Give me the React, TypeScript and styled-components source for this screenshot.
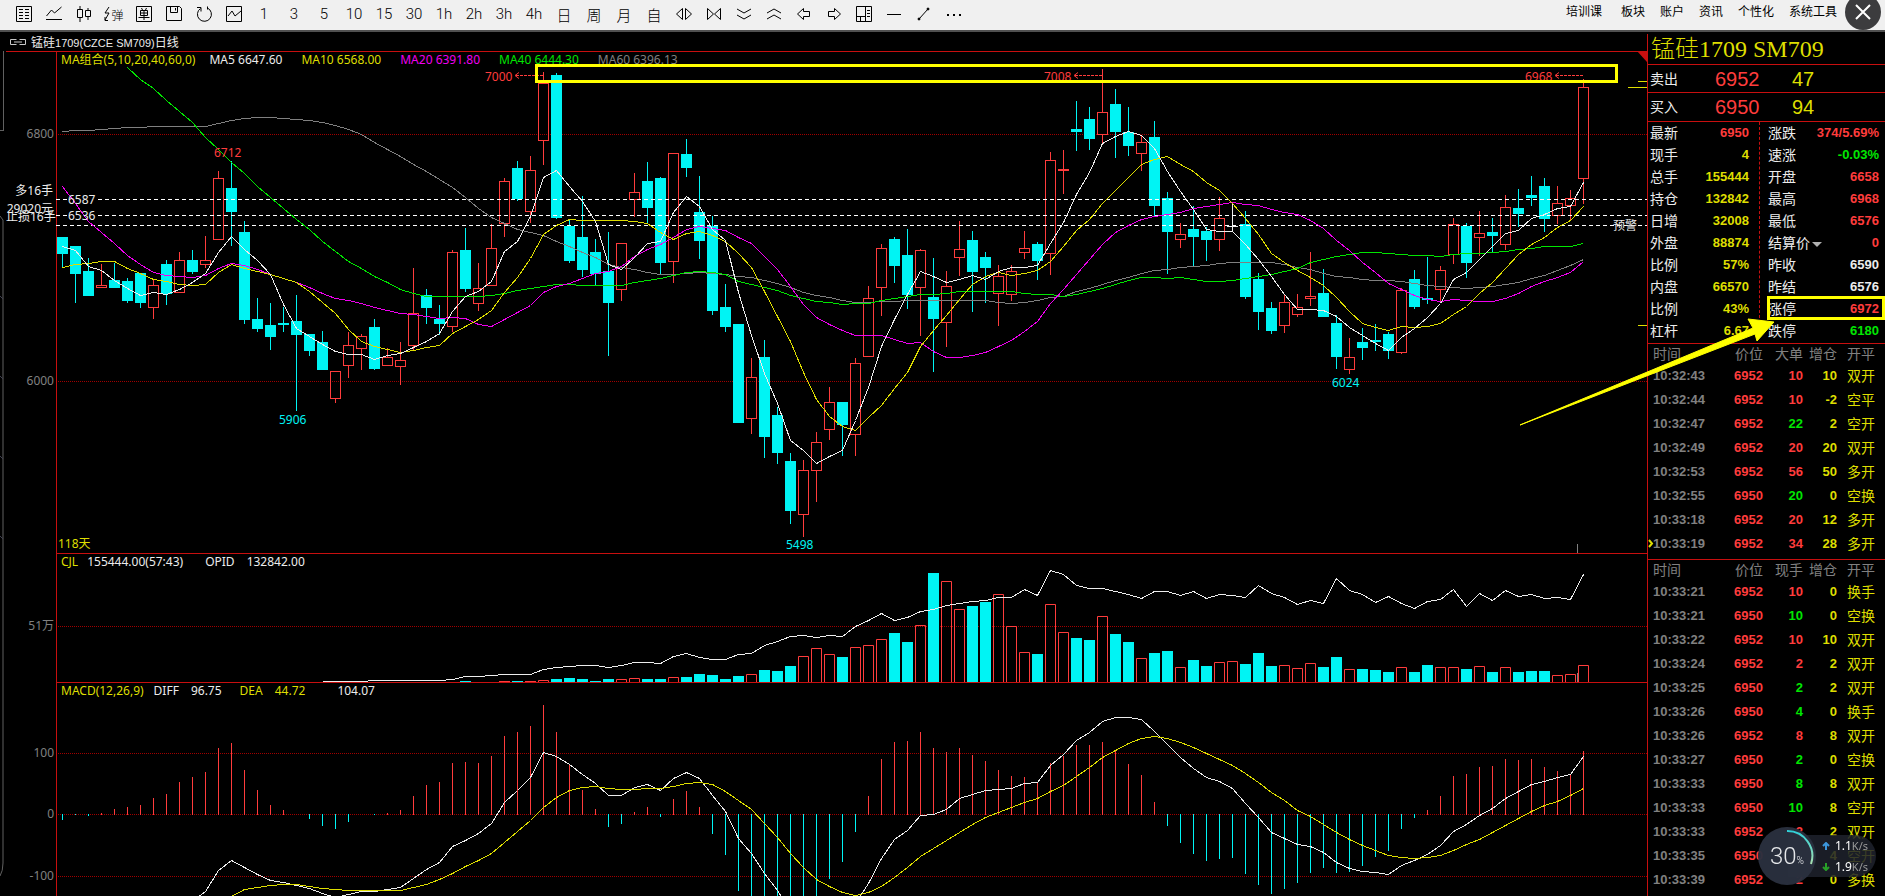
import React from 'react';
import styled, { createGlobalStyle } from 'styled-components';

const RED = '#ff3c3c';
const LINE = '#c80f0f';
const GRID = '#a00000';
const CYAN = '#00f4f4';
const WHITE = '#ececec';
const YELLOW = '#dede00';
const MARK = '#ffff00';
const MAGENTA = '#f000f0';
const GREEN = '#00e600';
const GREY = '#808080';

const SANS = '"Noto Sans", "Noto Sans CJK SC", sans-serif';
const ARIAL = '"Liberation Sans", "Noto Sans CJK SC", sans-serif';

/* ---------- data ---------- */

type Kind = 'u' | 'd' | 'n';
/* high, body top, body bottom, low, direction */
type Candle = [number, number, number, number, Kind];

const CANDLES: Candle[] = [
  [187, 187, 204, 218, 'd'], [196, 196, 224, 253, 'd'], [208, 221, 246, 246, 'd'], [214, 235, 238, 238, 'u'],
  [213, 230, 238, 238, 'd'], [228, 231, 251, 253, 'd'], [223, 223, 253, 258, 'd'], [229, 235, 258, 269, 'u'],
  [210, 214, 244, 255, 'd'], [202, 210, 243, 243, 'u'], [200, 210, 222, 224, 'd'], [186, 210, 215, 218, 'u'],
  [121, 128, 190, 190, 'u'], [111, 138, 162, 196, 'd'], [171, 182, 270, 274, 'd'], [248, 269, 279, 282, 'd'],
  [253, 275, 287, 300, 'd'], [257, 273, 275, 282, 'd'], [245, 271, 285, 361, 'd'], [284, 284, 301, 306, 'd'],
  [281, 292, 320, 320, 'd'], [321, 321, 349, 353, 'u'], [282, 295, 316, 328, 'u'], [284, 286, 299, 320, 'u'],
  [269, 277, 319, 320, 'd'], [298, 307, 316, 316, 'u'], [292, 310, 317, 335, 'u'], [218, 263, 296, 300, 'u'],
  [239, 245, 258, 274, 'd'], [255, 269, 274, 285, 'd'], [200, 202, 277, 282, 'u'], [178, 200, 239, 242, 'd'],
  [213, 238, 254, 261, 'u'], [174, 198, 236, 236, 'u'], [128, 131, 174, 187, 'u'], [111, 118, 149, 151, 'd'],
  [106, 120, 162, 173, 'u'], [22, 33, 91, 115, 'u'], [23, 25, 168, 169, 'd'], [170, 176, 211, 213, 'd'],
  [146, 187, 220, 227, 'd'], [189, 202, 224, 236, 'd'], [182, 221, 253, 306, 'd'], [193, 193, 240, 251, 'u'],
  [123, 142, 150, 167, 'u'], [112, 131, 158, 173, 'd'], [127, 128, 213, 224, 'd'], [103, 103, 212, 233, 'u'],
  [89, 104, 118, 127, 'd'], [126, 162, 191, 209, 'd'], [166, 176, 261, 265, 'd'], [234, 257, 277, 282, 'd'],
  [274, 274, 373, 373, 'd'], [308, 327, 369, 384, 'u'], [290, 307, 387, 408, 'd'], [357, 365, 403, 414, 'd'],
  [403, 411, 461, 474, 'd'], [410, 420, 465, 487, 'u'], [382, 392, 421, 452, 'u'], [337, 352, 380, 390, 'u'],
  [352, 352, 375, 406, 'd'], [308, 313, 385, 406, 'u'], [236, 248, 307, 307, 'u'], [194, 198, 238, 266, 'u'],
  [187, 189, 216, 233, 'd'], [179, 205, 245, 259, 'd'], [199, 200, 238, 286, 'u'], [208, 247, 269, 322, 'd'],
  [221, 236, 273, 297, 'u'], [171, 199, 208, 226, 'u'], [181, 190, 222, 262, 'd'], [202, 207, 218, 253, 'd'],
  [215, 226, 244, 276, 'u'], [215, 221, 245, 251, 'u'], [181, 198, 203, 209, 'u'], [192, 194, 211, 230, 'd'],
  [102, 110, 204, 225, 'u'], [100, 119, 121, 144, 'u'], [51, 79, 82, 101, 'd'], [57, 69, 89, 100, 'd'],
  [19, 62, 85, 93, 'u'], [39, 54, 82, 108, 'd'], [57, 82, 96, 106, 'd'], [86, 92, 104, 121, 'u'],
  [71, 87, 156, 166, 'd'], [142, 148, 182, 224, 'd'], [173, 184, 190, 198, 'u'], [156, 179, 187, 217, 'd'],
  [177, 181, 190, 211, 'd'], [147, 168, 190, 201, 'u'], [152, 176, 177, 182, 'n'], [161, 174, 247, 249, 'd'],
  [223, 229, 262, 280, 'd'], [252, 258, 281, 284, 'd'], [245, 252, 276, 283, 'u'], [244, 257, 265, 267, 'u'],
  [202, 246, 249, 256, 'u'], [219, 243, 267, 267, 'd'], [265, 273, 307, 319, 'd'], [288, 307, 320, 324, 'u'],
  [278, 292, 298, 310, 'd'], [274, 290, 292, 301, 'd'], [282, 284, 301, 309, 'd'], [238, 240, 303, 304, 'u'],
  [220, 229, 257, 259, 'd'], [207, 248, 250, 254, 'd'], [216, 220, 240, 251, 'u'], [168, 174, 205, 214, 'u'],
  [173, 176, 213, 228, 'd'], [161, 183, 188, 206, 'u'], [168, 182, 186, 202, 'd'], [145, 157, 195, 200, 'u'],
  [139, 158, 164, 177, 'd'], [126, 145, 148, 156, 'd'], [128, 136, 169, 182, 'd'], [136, 153, 166, 174, 'u'],
  [140, 148, 156, 170, 'u'], [29, 37, 129, 154, 'u'],
];

const MA5 = [
  587, 600, 648, 660, 690, 714, 734, 727, 731, 716, 697, 670, 606, 559, 596, 629, 672, 763, 835, 858,
  882, 902, 913, 913, 926, 916, 910, 892, 874, 849, 783, 739, 723, 692, 604, 573, 499, 380, 361, 408,
  452, 512, 642, 657, 620, 580, 574, 485, 439, 469, 536, 571, 727, 855, 970, 1060, 1170, 1199, 1238, 1217,
  1201, 1110, 1010, 888, 806, 733, 663, 677, 696, 687, 676, 686, 662, 652, 652, 646, 580, 515, 433, 365,
  278, 259, 244, 254, 294, 363, 423, 477, 538, 544, 544, 583, 627, 678, 731, 778, 778, 781, 797, 830,
  854, 880, 901, 862, 833, 802, 758, 687, 666, 626, 588, 548, 541, 503, 493, 473, 468, 396,
];
const MA10 = [
  650, 643, 639, 634, 634, 653, 668, 687, 694, 701, 706, 703, 667, 643, 655, 662, 673, 685, 697, 724,
  755, 788, 838, 874, 889, 898, 905, 901, 892, 885, 850, 827, 808, 780, 727, 680, 625, 553, 526, 508,
  511, 509, 511, 511, 514, 518, 545, 566, 550, 544, 556, 573, 610, 650, 722, 799, 872, 966, 1048, 1097,
  1129, 1141, 1102, 1066, 1013, 966, 888, 841, 796, 748, 702, 678, 667, 676, 670, 660, 632, 588, 541, 508,
  460, 421, 382, 343, 328, 319, 343, 363, 395, 419, 458, 503, 552, 610, 636, 660, 680, 704, 740, 784,
  818, 830, 841, 829, 832, 829, 820, 793, 767, 729, 696, 655, 612, 583, 560, 531, 509, 468,
];
const MA20 = [
  408, 460, 514, 545, 578, 616, 643, 667, 676, 677, 680, 675, 654, 639, 644, 656, 671, 685, 697, 712,
  730, 744, 751, 760, 772, 781, 790, 793, 797, 804, 801, 805, 822, 829, 808, 787, 764, 727, 709, 698,
  684, 668, 662, 647, 618, 598, 582, 560, 538, 527, 535, 541, 560, 580, 617, 657, 709, 763, 800, 822,
  841, 856, 856, 856, 868, 880, 877, 902, 922, 922, 916, 906, 887, 871, 842, 814, 760, 716, 671, 628,
  583, 547, 524, 508, 499, 491, 487, 475, 469, 463, 457, 461, 466, 476, 485, 492, 511, 533, 570, 600,
  635, 667, 699, 718, 735, 747, 752, 748, 750, 754, 754, 744, 729, 708, 694, 681, 665, 633,
];
/* starts at bar 5 */
const MA40 = [
  50, 86, 115, 149, 182, 217, 260, 298, 337, 370, 407, 441, 474, 507, 538,
  572, 602, 633, 654, 677, 697, 717, 730, 737, 739, 739, 739, 739, 734, 728, 721, 715, 707, 703, 703,
  706, 706, 706, 706, 696, 689, 685, 676, 667, 664, 667, 673, 692, 703, 712, 721, 736, 745, 754, 757,
  763, 760, 758, 751, 743, 739, 731, 731, 729, 724, 724, 724, 724, 724, 729, 733, 733, 739, 733, 724,
  713, 703, 691, 682, 682, 685, 682, 688, 694, 694, 689, 685, 678, 673, 664, 654, 637, 626, 618, 613,
  607, 607, 610, 613, 616, 616, 619, 613, 610, 610, 607, 602, 598, 593, 589, 587, 589, 580,
];
const MA60 = [
  244, 240, 239, 238, 235, 232, 231, 229, 229, 229, 229, 229, 218, 209, 205, 202, 202, 205, 208, 211,
  215, 226, 238, 253, 275, 296, 319, 343, 364, 387, 412, 442, 474, 500, 518, 536, 547, 556, 573, 589,
  605, 622, 642, 650, 656, 665, 673, 673, 670, 667, 670, 673, 679, 682, 691, 700, 712, 727, 735, 742,
  750, 757, 757, 754, 754, 751, 751, 751, 751, 751, 751, 751, 757, 760, 756, 751, 742, 737, 724, 714,
  703, 691, 680, 670, 661, 656, 651, 647, 644, 638, 637, 637, 637, 637, 643, 652, 658, 670, 679, 682,
  686, 690, 691, 694, 700, 706, 707, 710, 715, 712, 709, 703, 696, 685, 674, 661, 645, 627,
];

/* starts at bar 31 */
const VOLUME = [
  1, 0, 0, 1, 1, 1, 2, 3, 4, 3, 1, 3, 3, 4, 3, 3, 5, 5, 8, 7, 3, 6, 8, 12, 11, 16, 26, 34, 28, 25,
  35, 37, 43, 49, 40, 57, 109, 101, 73, 76, 80, 88, 56, 30, 28, 78, 50, 44, 42, 66, 48, 40, 24, 29, 31,
  15, 22, 16, 20, 21, 18, 29, 16, 17, 14, 19, 15, 25, 13, 13, 12, 10, 15, 10, 17, 15, 15, 13, 16, 10,
  15, 10, 11, 11, 7, 8, 17,
];
/* starts at bar 20 */
const OPEN_INTEREST = [
  424, 424, 424, 424, 421, 421, 421, 421, 421, 421, 418, 409, 409, 406, 401, 401, 401, 386, 380, 379,
  376, 376, 380, 376, 367, 367, 370, 347, 340, 352, 358, 358, 343, 339, 314, 304, 287, 286, 290, 286,
  289, 259, 239, 220, 241, 232, 214, 208, 196, 190, 184, 179, 172, 172, 148, 166, 91, 103, 136, 143,
  143, 154, 163, 173, 154, 154, 166, 154, 175, 163, 166, 172, 136, 160, 170, 193, 181, 190, 115, 151,
  161, 187, 169, 190, 205, 182, 178, 148, 199, 160, 181, 151, 169, 163, 175, 172, 178, 103,
];

const MACD = [
  -6, -1, -2, 2, 6, 8, 10, 17, 21, 33, 38, 43, 67, 72, 45, 25, 10, 5, 0, -5,
  -12, -15, -8, 0, -1, 2, 5, 19, 30, 33, 52, 53, 52, 59, 79, 83, 89, 110, 83, 51,
  25, 6, -13, -10, 3, 8, -3, 16, 24, 8, -20, -41, -77, -90, -110, -120, -120, -110, -90, -65,
  -48, -18, 19, 56, 73, 74, 83, 67, 63, 67, 60, 54, 45, 39, 38, 33, 52, 59, 70, 70,
  73, 65, 51, 40, 13, -12, -29, -40, -47, -45, -44, -60, -71, -80, -75, -69, -59, -54, -59, -58,
  -52, -43, -37, -15, -4, 5, 19, 39, 41, 48, 49, 56, 55, 56, 48, 44, 41, 64,
];
/* starts at bar 10 */
const DIFF = [
  1082, 1053, 990, 959, 982, 1002, 1021, 1027, 1035, 1045, 1058, 1070, 1063, 1052, 1054, 1048, 1042, 1013, 986, 966,
  918, 899, 879, 848, 785, 751, 710, 637, 648, 673, 703, 730, 766, 766, 742, 731, 751, 715, 695, 715,
  766, 814, 893, 940, 998, 1050, 1110, 1150, 1160, 1150, 1130, 1090, 1030, 954, 898, 871, 826, 823, 808, 775,
  763, 751, 748, 744, 730, 727, 676, 643, 601, 575, 544, 532, 532, 536, 572, 613, 652, 683, 712, 724,
  743, 789, 832, 875, 893, 913, 918, 935, 965, 985, 994, 997, 1003, 976, 961, 943, 916, 872, 851, 824,
  803, 773, 753, 731, 724, 712, 703, 649,
];
/* starts at bar 13 */
const DEA = [
  1068, 1048, 1040, 1036, 1033, 1033, 1037, 1043, 1048, 1051, 1051, 1051, 1051, 1049, 1042, 1031, 1018,
  998, 979, 959, 938, 907, 873, 840, 802, 770, 750, 742, 739, 745, 748, 748, 745, 745, 739, 730, 727,
  733, 752, 779, 808, 850, 891, 938, 980, 1016, 1039, 1057, 1066, 1057, 1038, 1010, 982, 949, 925, 901, 877,
  852, 832, 817, 801, 787, 774, 754, 734, 707, 680, 652, 629, 610, 595, 589, 595, 607, 622, 640, 656,
  674, 698, 725, 755, 781, 809, 829, 851, 875, 896, 916, 931, 946, 952, 955, 952, 946, 931, 912, 896,
  877, 856, 835, 814, 796, 782, 766, 743,
];

type Tick = [string, string, string, 'r' | 'g', string, string];
const BIG_ORDERS: Tick[] = [
  ['10:32:43', '6952', '10', 'r', '10', '双开'],
  ['10:32:44', '6952', '10', 'r', '-2', '空平'],
  ['10:32:47', '6952', '22', 'g', '2', '空开'],
  ['10:32:49', '6952', '20', 'r', '20', '双开'],
  ['10:32:53', '6952', '56', 'r', '50', '多开'],
  ['10:32:55', '6950', '20', 'g', '0', '空换'],
  ['10:33:18', '6952', '20', 'r', '12', '多开'],
  ['10:33:19', '6952', '34', 'r', '28', '多开'],
];
const TICKS: Tick[] = [
  ['10:33:21', '6952', '10', 'r', '0', '换手'],
  ['10:33:21', '6950', '10', 'g', '0', '空换'],
  ['10:33:22', '6952', '10', 'r', '10', '双开'],
  ['10:33:24', '6952', '2', 'r', '2', '双开'],
  ['10:33:25', '6950', '2', 'g', '2', '双开'],
  ['10:33:26', '6950', '4', 'g', '0', '换手'],
  ['10:33:26', '6952', '8', 'r', '8', '双开'],
  ['10:33:27', '6950', '2', 'g', '0', '空换'],
  ['10:33:33', '6950', '8', 'g', '8', '双开'],
  ['10:33:33', '6950', '10', 'g', '8', '空开'],
  ['10:33:33', '6952', '2', 'r', '2', '双开'],
  ['10:33:35', '6950', '10', 'g', '4', '空开'],
  ['10:33:39', '6952', '2', 'r', '0', '多换'],
];

const LEFT_QUOTES: [string, string, string][] = [
  ['最新', '6950', RED], ['现手', '4', YELLOW], ['总手', '155444', YELLOW], ['持仓', '132842', YELLOW],
  ['日增', '32008', YELLOW], ['外盘', '88874', YELLOW], ['比例', '57%', YELLOW], ['内盘', '66570', YELLOW],
  ['比例', '43%', YELLOW], ['杠杆', '6.67', YELLOW],
];
const RIGHT_QUOTES: [string, string, string][] = [
  ['涨跌', '374/5.69%', RED], ['速涨', '-0.03%', GREEN], ['开盘', '6658', RED], ['最高', '6968', RED],
  ['最低', '6576', RED], ['结算价', '0', RED], ['昨收', '6590', WHITE], ['昨结', '6576', WHITE],
  ['涨停', '6972', RED], ['跌停', '6180', GREEN],
];

/* ---------- page frame ---------- */

const Global = createGlobalStyle`
  * { box-sizing: border-box; }
  body { margin: 0; background: #000; font-family: ${SANS}; font-size: 12px; color: ${WHITE}; }
  button { font: inherit; color: inherit; background: none; border: 0; padding: 0; cursor: pointer; }
`;

const Page = styled.div`
  height: 100vh;
  display: flex;
  flex-direction: column;
  overflow: hidden;
  position: relative;
  background: #000;
`;

const Toolbar = styled.header`
  flex: none;
  height: 32px;
  display: flex;
  justify-content: space-between;
  background: #f0f0f0;
  border-bottom: 2px solid #505050;
  color: #000;
`;

const ToolGroup = styled.nav`
  display: flex;
  align-items: center;
  height: 28px;
  padding-left: 9px;
`;

const ToolButton = styled.button`
  width: 30px;
  height: 28px;
  display: flex;
  align-items: center;
  justify-content: center;
  font-family: Roboto, "Noto Sans CJK SC", sans-serif;
  font-size: 15px;
  font-weight: 300;
  svg { display: block; }
  small { font-size: 12px; }
`;

const Menu = styled.nav`
  display: flex;
  align-items: center;
  height: 24px;
  gap: 15px;
  padding-right: 4px;
`;

const MenuLink = styled.a<{ $wide?: boolean }>`
  color: #000;
  text-decoration: none;
  line-height: 24px;
  margin-right: ${(p) => (p.$wide ? 4 : 0)}px;
`;

const CloseButton = styled.button`
  width: 36px;
  height: 36px;
  margin: 0 0 0 -7px;
  border-radius: 50%;
  background: #3c3c3e;
  display: flex;
  align-items: center;
  justify-content: center;
  position: relative;
  z-index: 2;
`;

const Body = styled.main`
  flex: 1;
  min-height: 0;
  display: flex;
`;

const ChartColumn = styled.section`
  flex: 1;
  min-width: 0;
  display: flex;
  flex-direction: column;
`;

const TitleBar = styled.h1`
  margin: 0;
  flex: none;
  height: 19px;
  display: flex;
  align-items: center;
  gap: 5px;
  padding-left: 10px;
  font-family: ${ARIAL};
  font-size: 11px;
  font-weight: 400;
  span { font-size: 12px; }
`;

const ChartRow = styled.div`
  flex: 1;
  min-height: 0;
  display: flex;
`;

const Rail = styled.svg`
  flex: none;
  display: block;
  width: 6px;
  height: 100%;
`;

const Panels = styled.div`
  flex: 1;
  min-width: 0;
  display: flex;
  flex-direction: column;
  border-top: 1px solid ${LINE};
`;

/* legend and drawing share one grid cell */
const Panel = styled.section<{ $height?: number }>`
  display: grid;
  overflow: hidden;
  min-height: 0;
  ${(p) => (p.$height ? `flex: none; height: ${p.$height}px;` : 'flex: 1;')}
  > * { grid-area: 1 / 1; }
`;

const Drawing = styled.svg`
  display: block;
  width: 100%;
  height: 100%;
  text { font-family: ${SANS}; font-size: 12px; }
`;

const Legend = styled.div`
  display: flex;
  align-items: flex-start;
  padding-left: 55px;
  height: 16px;
  line-height: 16px;
  white-space: pre;
`;

const LegendItem = styled.span<{ $color: string; $gap: number }>`
  color: ${(p) => p.$color};
  margin-right: ${(p) => p.$gap}px;
`;

const Separator = styled.div`
  flex: none;
  height: 1px;
  margin-left: 50px;
  background: ${LINE};
`;

/* ---------- side panel ---------- */

const Side = styled.aside`
  flex: none;
  width: 238px;
  margin-top: 2px;
  border-left: 1px solid ${LINE};
  font-size: 14px;
  position: relative;
  z-index: 1;
`;

const Contract = styled.h2`
  margin: 0;
  height: 31px;
  padding-left: 3px;
  line-height: 30px;
  border-bottom: 1px solid ${LINE};
  font-family: "Liberation Serif", "Noto Sans CJK SC", serif;
  font-size: 24px;
  font-weight: 300;
  color: ${YELLOW};
  white-space: nowrap;
  overflow: hidden;
`;

const OrderLine = styled.div`
  display: grid;
  grid-template-columns: 65px 77px 1fr;
  align-items: center;
  height: 29px;
  padding-left: 2px;
  line-height: 28px;
  border-bottom: 1px solid ${LINE};
  &:first-of-type { height: 28px; }
`;

const OrderPrice = styled.span<{ $color: string }>`
  font-family: "Liberation Sans", sans-serif;
  font-size: 20px;
  color: ${(p) => p.$color};
`;

const Quotes = styled.div`
  display: flex;
  height: 222px;
  border-bottom: 1px solid ${LINE};
`;

const QuoteList = styled.dl<{ $left?: boolean }>`
  margin: 0;
  ${(p) => (p.$left ? 'width: 112px; padding: 0 11px 0 2px;' : 'flex: 1; padding: 0 6px 0 8px;')}
`;

const Divider = styled.div`
  width: 0;
  height: 196px;
  margin-left: -1px;
  border-left: 1px dashed ${LINE};
`;

const Quote = styled.div`
  display: flex;
  justify-content: space-between;
  height: 22px;
  line-height: 22px;
  dt { display: flex; align-items: center; gap: 2px; }
`;

const QuoteValue = styled.dd<{ $color: string }>`
  margin: 0;
  font-family: ${ARIAL};
  font-size: 13px;
  font-weight: 700;
  color: ${(p) => p.$color};
`;

const Trades = styled.table`
  width: 100%;
  table-layout: fixed;
  border-collapse: collapse;
  th, td { padding: 0; text-align: right; }
  th { height: 20px; line-height: 20px; font-weight: 400; color: ${GREY}; }
  td { height: 24px; line-height: 24px; font-family: ${ARIAL}; font-size: 13px; font-weight: 700; color: ${YELLOW}; }
  th:first-child, td:first-child { text-align: left; padding-left: 5px; }
  td:first-child { color: ${GREY}; }
  th:last-child, td:last-child { text-align: left; padding-left: 10px; font-weight: 400; font-size: 14px; }
`;

const TradeBlock = styled.section<{ $ruled?: boolean }>`
  ${(p) => (p.$ruled ? `padding-bottom: 3px; border-bottom: 1px solid ${LINE};` : '')}
  position: relative;
`;

const Price = styled.span<{ $side?: 'r' | 'g' }>`
  color: ${(p) => (p.$side === 'g' ? GREEN : RED)};
`;

const Cursor = styled.svg`
  position: absolute;
  left: 0;
  bottom: 11px;
`;

const LimitMark = styled.div`
  position: absolute;
  left: 119px;
  right: 0;
  top: 262px;
  height: 24px;
  border: 3px solid ${MARK};
`;

const Pointer = styled.svg`
  position: absolute;
  right: 108px;
  top: 282px;
  pointer-events: none;
`;

/* ---------- network speed widget ---------- */

const Speed = styled.div`
  position: fixed;
  right: 9px;
  bottom: 11px;
  display: flex;
  align-items: center;
  z-index: 3;
`;

const Dial = styled.div`
  width: 58px;
  height: 58px;
  border-radius: 50%;
  background: rgba(42, 48, 62, 0.96);
  display: grid;
  place-items: center;
  z-index: 1;
  > * { grid-area: 1 / 1; }
`;

const Percent = styled.div`
  font-family: Roboto, sans-serif;
  font-weight: 300;
  font-size: 24px;
  color: #e6e8ea;
  small { font-size: 10px; }
`;

const Rates = styled.div`
  height: 42px;
  width: 88px;
  margin-left: -28px;
  padding: 0 8px 0 34px;
  border-radius: 0 21px 21px 0;
  background: rgba(30, 34, 44, 0.86);
`;

const Rate = styled.div`
  display: flex;
  align-items: center;
  justify-content: space-between;
  height: 21px;
  color: #fff;
  small { font-size: 11px; color: #9a9a9a; }
`;

/* ---------- drawings ---------- */

const PLOT_LEFT = 51;
const barX = (i: number) => PLOT_LEFT + 5 + 13 * i;

function Series({ values, start = 0, shift, color }: { values: number[]; start?: number; shift: number; color: string }) {
  const points = values.map((v, k) => `${barX(start + k)},${Math.round(v / 3) - shift}`).join(' ');
  return <polyline points={points} fill="none" stroke={color} strokeWidth="1" shapeRendering="crispEdges" transform="translate(.5 .5)" />;
}

function GridLine({ y, label }: { y: number; label: string }) {
  return (
    <g>
      <text x="48" y={y + 4} textAnchor="end" fill={GREY}>{label}</text>
      <line x1={PLOT_LEFT + 1} x2="100%" y1={y + 0.5} y2={y + 0.5} stroke={GRID} strokeDasharray="1 1" />
    </g>
  );
}

const Axis = () => <rect x={PLOT_LEFT - 1} y="0" width="1" height="100%" fill={LINE} />;

function CandleShape({ data, i }: { data: Candle; i: number }) {
  const [high, top, bottom, low, kind] = data;
  const x = barX(i);
  const color = kind === 'u' ? RED : kind === 'd' ? CYAN : WHITE;
  const hollow = kind === 'u' && bottom - top > 2;
  return (
    <g fill={color}>
      {high < top && <rect x={x} y={high - 2} width="1" height={top - high} />}
      {low > bottom && <rect x={x} y={bottom - 2} width="1" height={low - bottom} />}
      {hollow ? (
        <rect x={x - 4.5} y={top - 1.5} width="10" height={bottom - top - 1} fill="none" stroke={RED} />
      ) : (
        <rect x={x - 5} y={top - 2} width="11" height={Math.max(1, bottom - top)} />
      )}
    </g>
  );
}

function PeakLabel({ x, text }: { x: number; text: string }) {
  return (
    <g>
      <text x={x} y="29" fill={RED}>{text}</text>
      <path d={`M${x + 31} 23.5H${x + 59}`} stroke={RED} strokeDasharray="3 1" />
      <path d={`M${x + 34} 20.5l-4 3 4 3`} stroke={RED} fill="none" />
    </g>
  );
}

function PricePanel() {
  return (
    <Panel $height={501}>
      <Legend>
        <LegendItem $color={YELLOW} $gap={14}>MA组合(5,10,20,40,60,0)</LegendItem>
        <LegendItem $color={WHITE} $gap={19}>MA5 6647.60</LegendItem>
        <LegendItem $color={YELLOW} $gap={19}>MA10 6568.00</LegendItem>
        <LegendItem $color={MAGENTA} $gap={19}>MA20 6391.80</LegendItem>
        <LegendItem $color={GREEN} $gap={19}>MA40 6444.30</LegendItem>
        <LegendItem $color={GREY} $gap={0}>MA60 6396.13</LegendItem>
      </Legend>
      <Drawing>
        <Axis />
        <GridLine y={82} label="6800" />
        <GridLine y={329} label="6000" />
        {CANDLES.map((c, i) => <CandleShape key={i} data={c} i={i} />)}
        {[147, 163, 173].map((y) => (
          <line key={y} x1="50" x2="100%" y1={y + 0.5} y2={y + 0.5} stroke="#fff" strokeDasharray="4 3" />
        ))}
        <path d="M61 147.500h29M61 163.500h29" stroke="#000" />
        <Series values={MA60} shift={2} color={GREY} />
        <Series values={MA40} start={5} shift={2} color={GREEN} />
        <Series values={MA20} shift={2} color={MAGENTA} />
        <Series values={MA10} shift={2} color={YELLOW} />
        <Series values={MA5} shift={2} color={WHITE} />
        <g fill={WHITE}>
          <text x="47" y="143" textAnchor="end">多16手</text>
          <text x="47" y="161" textAnchor="end">29020元</text>
          <text x="0" y="169">止损16手</text>
          <text x="62" y="152">6587</text>
          <text x="62" y="168">6536</text>
          <text x="1607" y="178">预警</text>
        </g>
        <text x="208" y="105" fill={RED}>6712</text>
        <g fill={CYAN}>
          <text x="273" y="372">5906</text>
          <text x="780" y="497">5498</text>
          <text x="1326" y="335">6024</text>
        </g>
        <text x="52" y="496" fill={YELLOW}>118天</text>
        <PeakLabel x={479} text="7000" />
        <PeakLabel x={1038} text="7008" />
        <PeakLabel x={1519} text="6968" />
        <path d="M1632 29.500h9M1622 35.500h19M1632 273.500h9" stroke={YELLOW} />
        <path d="M1631 -1h10v11z" fill={LINE} />
        <rect x="1571" y="492" width="1" height="10" fill={GREY} />
        <rect x="530.5" y="13.5" width="1080" height="16" fill="none" stroke={MARK} strokeWidth="3" />
      </Drawing>
    </Panel>
  );
}

function VolumePanel() {
  return (
    <Panel $height={128}>
      <Legend>
        <LegendItem $color={YELLOW} $gap={9}>CJL</LegendItem>
        <LegendItem $color={WHITE} $gap={22}>155444.00(57:43)</LegendItem>
        <LegendItem $color={WHITE} $gap={12}>OPID</LegendItem>
        <LegendItem $color={WHITE} $gap={0}>132842.00</LegendItem>
      </Legend>
      <Drawing>
        <Axis />
        <GridLine y={72} label="51万" />
        {VOLUME.map((h, k) => {
          const i = 31 + k;
          const x = barX(i);
          if (h === 0) return null;
          return CANDLES[i][4] === 'd' || h < 2 ? (
            <rect key={k} x={x - 5} y={128 - h} width="11" height={h} fill={CANDLES[i][4] === 'd' ? CYAN : RED} />
          ) : (
            <path key={k} d={`M${x - 4.5} 128V${128.5 - h}h10V128`} fill="none" stroke={RED} />
          );
        })}
        <Series values={OPEN_INTEREST} start={20} shift={14} color={WHITE} />
        <rect x="1571" y="119" width="1" height="9" fill={GREY} />
      </Drawing>
    </Panel>
  );
}

function MacdPanel() {
  return (
    <Panel>
      <Legend>
        <LegendItem $color={YELLOW} $gap={10}>MACD(12,26,9)</LegendItem>
        <LegendItem $color={WHITE} $gap={12}>DIFF</LegendItem>
        <LegendItem $color={WHITE} $gap={18}>96.75</LegendItem>
        <LegendItem $color={YELLOW} $gap={12}>DEA</LegendItem>
        <LegendItem $color={YELLOW} $gap={32}>44.72</LegendItem>
        <LegendItem $color={WHITE} $gap={0}>104.07</LegendItem>
      </Legend>
      <Drawing>
        <Axis />
        <GridLine y={70} label="100" />
        <GridLine y={131} label="0" />
        <GridLine y={193} label="-100" />
        {MACD.map((v, i) =>
          v === 0 ? null : (
            <rect key={i} x={barX(i)} y={v > 0 ? 132 - v : 131} width="1" height={Math.abs(v)} fill={v > 0 ? RED : CYAN} />
          ),
        )}
        <Series values={DIFF} start={10} shift={143} color={WHITE} />
        <Series values={DEA} start={13} shift={143} color={YELLOW} />
      </Drawing>
    </Panel>
  );
}

/* ---------- toolbar ---------- */

const Icon = ({ children }: { children: React.ReactNode }) => (
  <svg width="18" height="18" viewBox="0 0 18 18" fill="none" stroke="#000" strokeWidth="1" shapeRendering="geometricPrecision">
    {children}
  </svg>
);

const TOOLS: [string, React.ReactNode][] = [
  ['列表', <Icon><path d="M1.500 1.500h15v15h-15zM4 4.500h4M10 4.500h4M4 7.500h4M10 7.500h4M4 10.500h4M10 10.500h4M4 13.500h4M10 13.500h4" /></Icon>],
  ['分时', <Icon><path d="M1.500 11l5-6 3 3 7-6M1 14.500h16" /></Icon>],
  ['K线', <Icon><path d="M2.500 4.500h5v8h-5zM5 1v3M5 13v4M10.500 5.500h5v6h-5zM13 3v2M13 12v3" /></Icon>],
  ['闪电弹', <><svg width="7" height="16" viewBox="0 0 7 16" fill="none" stroke="#000"><path d="M5 1L1 7h4L1 14M1 11v3.500h3" /></svg><small>弹</small></>],
  ['下单', <Icon><path d="M1.500 1.500h15v15h-15zM5.500 5.500h7v5h-7zM5.500 8h7M9 5v10M3.500 12.500h11M6.500 3l1 2M11.500 3l-1 2" /></Icon>],
  ['保存', <Icon><path d="M1.500 1.500h13l2 2v12h-15zM5.500 1.500v6h7v-6M10.500 3v2.500" /></Icon>],
  ['刷新', <Icon><path d="M5.500 3.500a7 7 0 1 0 7-.5M2 2.500h4v4M12.500 1.500v3" /></Icon>],
  ['图表', <Icon><path d="M1.500 1.500h15v15h-15zM3 11l4-5 3 5 6-5" /></Icon>],
  ['1', '1'], ['3', '3'], ['5', '5'], ['10', '10'], ['15', '15'], ['30', '30'],
  ['1h', '1h'], ['2h', '2h'], ['3h', '3h'], ['4h', '4h'], ['日', '日'], ['周', '周'], ['月', '月'], ['自', '自'],
  ['左右', <Icon><path d="M7.500 3.500l-6 5.500 6 5.500zM10.500 3.500l6 5.500-6 5.500z" /></Icon>],
  ['合拢', <Icon><path d="M2.500 3.500v11l6-5.500zM15.500 3.500v11l-6-5.500z" /></Icon>],
  ['向下', <Icon><path d="M2 4l7 4 7-4M2 10l7 4 7-4" /></Icon>],
  ['向上', <Icon><path d="M2 8l7-4 7 4M2 14l7-4 7 4" /></Icon>],
  ['左移', <Icon><path d="M8.500 3.500l-6 5.500 6 5.500v-3h6v-5h-6z" /></Icon>],
  ['右移', <Icon><path d="M9.500 3.500l6 5.500-6 5.500v-3h-6v-5h6z" /></Icon>],
  ['布局', <Icon><path d="M1.500 1.500h15v15h-15zM10.500 1.500v15M1.500 11.500h9M12 5.500h3M12 8.500h3M12 11.500h3M5.500 11.500v5" /></Icon>],
  ['横线', <Icon><path d="M2 9.500h14" /></Icon>],
  ['斜线', <Icon><path d="M4 14l9-10" /><circle cx="4" cy="14" r="1" fill="#000" /><circle cx="13" cy="4" r="1" fill="#000" /></Icon>],
  ['更多', <Icon><path d="M2 10h2M8 10h2M14 10h2" strokeWidth="2" /></Icon>],
];

function TradeTable({ rows, head }: { rows: Tick[]; head: string }) {
  return (
    <Trades>
      <colgroup>
        <col style={{ width: 70 }} />
        <col style={{ width: 45 }} />
        <col style={{ width: 40 }} />
        <col style={{ width: 34 }} />
        <col />
      </colgroup>
      <thead>
        <tr><th>时间</th><th>价位</th><th>{head}</th><th>增仓</th><th>开平</th></tr>
      </thead>
      <tbody>
        {rows.map((r, i) => (
          <tr key={i}>
            <td>{r[0]}</td>
            <td><Price>{r[1]}</Price></td>
            <td><Price $side={r[3]}>{r[2]}</Price></td>
            <td>{r[4]}</td>
            <td>{r[5]}</td>
          </tr>
        ))}
      </tbody>
    </Trades>
  );
}

function QuoteRows({ rows }: { rows: [string, string, string][] }) {
  return (
    <>
      {rows.map(([label, value, color], i) => (
        <Quote key={i}>
          <dt>
            {label}
            {label === '结算价' && (
              <button aria-label="切换结算价">
                <svg width="10" height="10" viewBox="0 0 10 10"><path d="M0 4h10l-5 5z" fill="#b0b0b0" /></svg>
              </button>
            )}
          </dt>
          <QuoteValue $color={color}>{value}</QuoteValue>
        </Quote>
      ))}
    </>
  );
}

export default function App() {
  return (
    <Page>
      <Global />
      <Toolbar>
        <ToolGroup>
          {TOOLS.map(([name, face]) => <ToolButton key={name} aria-label={name}>{face}</ToolButton>)}
        </ToolGroup>
        <Menu>
          <MenuLink href="#course" $wide>培训课</MenuLink>
          <MenuLink href="#sectors">板块</MenuLink>
          <MenuLink href="#account">账户</MenuLink>
          <MenuLink href="#news">资讯</MenuLink>
          <MenuLink href="#personal">个性化</MenuLink>
          <MenuLink href="#tools">系统工具</MenuLink>
          <CloseButton aria-label="关闭">
            <svg width="16" height="16" viewBox="0 0 16 16" stroke="#fff" strokeWidth="2"><path d="M1 1l14 14M15 1L1 15" /></svg>
          </CloseButton>
        </Menu>
      </Toolbar>
      <Body>
        <ChartColumn>
          <TitleBar>
            <svg width="16" height="8" viewBox="0 0 16 8" fill="none" stroke="#c8c8c8">
              <path d="M6.500 1.500h-6v5h6M9.500 1.500h6v5h-6M4 4h8" />
            </svg>
            <div><span>锰硅</span>1709(CZCE SM709)<span>日线</span></div>
          </TitleBar>
          <ChartRow>
            <Rail>
              <path d="M3.500 0V79M0 79.500h4M0 165l3 4V812q0 8-3 13" fill="none" stroke="#606060" />
              <path d="M0 245l3 3M0 325l3 3M0 405l3 3M0 485l3 3" stroke="#404050" />
            </Rail>
            <Panels>
              <PricePanel />
              <Separator />
              <VolumePanel />
              <Separator />
              <MacdPanel />
            </Panels>
          </ChartRow>
        </ChartColumn>
        <Side>
          <Contract>锰硅1709 SM709</Contract>
          <OrderLine>
            <span>卖出</span><OrderPrice $color={RED}>6952</OrderPrice><OrderPrice $color={YELLOW}>47</OrderPrice>
          </OrderLine>
          <OrderLine>
            <span>买入</span><OrderPrice $color={RED}>6950</OrderPrice><OrderPrice $color={YELLOW}>94</OrderPrice>
          </OrderLine>
          <Quotes>
            <QuoteList $left><QuoteRows rows={LEFT_QUOTES} /></QuoteList>
            <Divider />
            <QuoteList><QuoteRows rows={RIGHT_QUOTES} /></QuoteList>
          </Quotes>
          <TradeBlock $ruled>
            <TradeTable rows={BIG_ORDERS} head="大单" />
            <Cursor width="6" height="9" viewBox="0 0 6 9"><path d="M1 1l3 3.500L1 8" fill="none" stroke={YELLOW} strokeWidth="2" /></Cursor>
          </TradeBlock>
          <TradeBlock>
            <TradeTable rows={TICKS} head="现手" />
          </TradeBlock>
          <LimitMark />
          <Pointer width="260" height="112" viewBox="0 0 260 112">
            <path d="M3 109L236 12L231 3L257 6L240 25L238 18Z" fill={MARK} stroke={MARK} />
          </Pointer>
        </Side>
      </Body>
      <Speed>
        <Dial>
          <svg width="58" height="58" viewBox="0 0 58 58" fill="none" strokeWidth="2">
            <defs>
              <linearGradient id="arc" x1="0" y1="0" x2="0" y2="1">
                <stop offset="0" stopColor="#2fd0d8" />
                <stop offset="1" stopColor="#a8e0b0" />
              </linearGradient>
            </defs>
            <path d="M29 4A25 25 0 0 1 53 37" stroke="url(#arc)" />
          </svg>
          <Percent>30<small>%</small></Percent>
        </Dial>
        <Rates>
          <Rate>
            <svg width="8" height="8" viewBox="0 0 8 8"><path d="M4 1v7M1 4l3-3 3 3" fill="none" stroke="#3c96dc" strokeWidth="2" /></svg>
            <span>1.1<small>K/s</small></span>
          </Rate>
          <Rate>
            <svg width="8" height="8" viewBox="0 0 8 8"><path d="M4 0v7M1 4l3 3 3-3" fill="none" stroke="#28a028" strokeWidth="2" /></svg>
            <span>1.9<small>K/s</small></span>
          </Rate>
        </Rates>
      </Speed>
    </Page>
  );
}
